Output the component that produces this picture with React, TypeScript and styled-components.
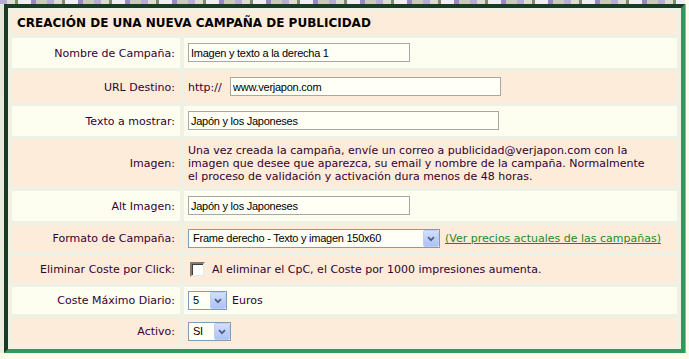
import React from 'react'
import styled, { createGlobalStyle } from 'styled-components'

type Tone = 'peach' | 'ivory'

const tones: Record<Tone, string> = {
  peach: '#fdecd9',
  ivory: '#fefef0',
}

const GlobalStyle = createGlobalStyle`
  html, body {
    margin: 0;
    padding: 0;
    background: #fdfde9;
  }
  body {
    font-family: "DejaVu Sans", Verdana, sans-serif;
    font-size: 11px;
    color: #330033;
  }
`

const Backdrop = styled.div`
  display: inline-block;
  vertical-align: top;
  padding: 4px 0 0 4px;
  background:
    repeating-linear-gradient(90deg, #b7acd6 0 7px, #dcdcd0 7px 15px, #7d8c6a 15px 18px, #efeef4 18px 31px, #9a88c4 31px 36px, #c8cbb8 36px 47px) top left / 100% 4px no-repeat,
    linear-gradient(180deg, #e4e6d8, #eceee2);
`

const Frame = styled.div`
  width: 665px;
  padding: 4px;
  border: 4px solid;
  border-color: #1b3a24 #2e9b5c #2e9b5c #1b3a24;
  background:
    radial-gradient(circle at 97% 4%, rgba(150, 120, 200, 0.35) 0 6px, transparent 7px),
    radial-gradient(circle at 40% 30%, rgba(200, 200, 190, 0.5) 0 3px, transparent 4px),
    #f0f1e5;
  box-shadow: 1px 0 0 #a9aaa0;
`

const FormGrid = styled.div`
  display: grid;
  grid-template-columns: 168px 493px;
  gap: 4px;
`

const HeaderCell = styled.div`
  grid-column: 1 / span 2;
  background: ${tones.peach};
  padding: 4px 5px;
  font-weight: bold;
  font-size: 12px;
  line-height: 14px;
  color: #000;
`

const LabelCell = styled.div<{ $tone: Tone }>`
  background: ${p => tones[p.$tone]};
  display: flex;
  align-items: center;
  justify-content: flex-end;
  padding: 4px 5px 4px 4px;
  line-height: 13px;
  white-space: nowrap;
`

const ValueCell = styled.div<{ $tone: Tone }>`
  background: ${p => tones[p.$tone]};
  display: flex;
  align-items: center;
  padding: 4px;
  line-height: 13px;
  white-space: nowrap;
`

const TextInput = styled.input<{ $width: number }>`
  box-sizing: border-box;
  width: ${p => p.$width}px;
  height: 19px;
  margin: 1px 0 2px;
  padding: 0 2px;
  border: 1px solid #a6a9a8;
  background: #fffff6;
  font-family: "Liberation Sans", Arial, sans-serif;
  font-size: 11px;
  letter-spacing: -0.25px;
  color: #000;
  outline: none;
`

const Prefix = styled.span`
  width: 42px;
  flex: none;
`

const SelectBox = styled.div<{ $width: number }>`
  box-sizing: border-box;
  width: ${p => p.$width}px;
  height: 19px;
  display: inline-flex;
  align-items: stretch;
  border: 1px solid #7f9db9;
  background: #fffff6;
  flex: none;
`

const SelectText = styled.span`
  flex: 1;
  padding-left: 4px;
  display: flex;
  align-items: center;
  font-family: "Liberation Sans", Arial, sans-serif;
  font-size: 11px;
  letter-spacing: -0.25px;
  color: #000;
  overflow: hidden;
`

const ArrowButton = styled.span`
  box-sizing: border-box;
  width: 16px;
  display: flex;
  align-items: center;
  justify-content: center;
  border: 1px solid #bccdf6;
  border-radius: 2px;
  background: linear-gradient(180deg, #d3e0fd 0%, #bccef8 55%, #aec3f3 100%);
`

const GreenLink = styled.a`
  margin-left: 5px;
  color: #1f8a22;
  text-decoration: underline;
  cursor: pointer;
`

const Checkbox = styled.span`
  box-sizing: border-box;
  width: 15px;
  height: 15px;
  margin: 2px 7px 2px 2px;
  flex: none;
  border: 2px solid;
  border-color: #7c7c72 #ecece4 #ecece4 #7c7c72;
  box-shadow: inset 1px 1px 0 #3e3e3a;
  background: #fff;
`

const Unit = styled.span`
  margin-left: 5px;
`

const Note = styled.p`
  margin: 0;
  white-space: normal;
`

const Select = ({ value, width }: { value: string; width: number }) => (
  <SelectBox $width={width}>
    <SelectText>{value}</SelectText>
    <ArrowButton>
      <svg width="8" height="6" viewBox="0 0 8 6">
        <path d="M1 1.2 L4 4.2 L7 1.2" fill="none" stroke="#4b5f86" strokeWidth="1.7" />
      </svg>
    </ArrowButton>
  </SelectBox>
)

const rows: { label: string; tone: Tone; content: React.ReactNode }[] = [
  {
    label: 'Nombre de Campaña:',
    tone: 'ivory',
    content: <TextInput $width={222} defaultValue="Imagen y texto a la derecha 1" />,
  },
  {
    label: 'URL Destino:',
    tone: 'peach',
    content: (
      <>
        <Prefix>http://</Prefix>
        <TextInput $width={271} defaultValue="www.verjapon.com" />
      </>
    ),
  },
  {
    label: 'Texto a mostrar:',
    tone: 'ivory',
    content: <TextInput $width={311} defaultValue="Japón y los Japoneses" />,
  },
  {
    label: 'Imagen:',
    tone: 'peach',
    content: (
      <Note>
        Una vez creada la campaña, envíe un correo a publicidad@verjapon.com con la
        <br />
        imagen que desee que aparezca, su email y nombre de la campaña. Normalmente
        <br />
        el proceso de validación y activación dura menos de 48 horas.
      </Note>
    ),
  },
  {
    label: 'Alt Imagen:',
    tone: 'ivory',
    content: <TextInput $width={222} defaultValue="Japón y los Japoneses" />,
  },
  {
    label: 'Formato de Campaña:',
    tone: 'peach',
    content: (
      <>
        <Select width={252} value="Frame derecho - Texto y imagen 150x60" />
        <GreenLink>(Ver precios actuales de las campañas)</GreenLink>
      </>
    ),
  },
  {
    label: 'Eliminar Coste por Click:',
    tone: 'peach',
    content: (
      <>
        <Checkbox />
        Al eliminar el CpC, el Coste por 1000 impresiones aumenta.
      </>
    ),
  },
  {
    label: 'Coste Máximo Diario:',
    tone: 'ivory',
    content: (
      <>
        <Select width={39} value="5" />
        <Unit>Euros</Unit>
      </>
    ),
  },
  {
    label: 'Activo:',
    tone: 'peach',
    content: <Select width={43} value="SI" />,
  },
]

export default function App() {
  return (
    <>
      <GlobalStyle />
      <Backdrop>
        <Frame>
          <FormGrid>
            <HeaderCell>CREACIÓN DE UNA NUEVA CAMPAÑA DE PUBLICIDAD</HeaderCell>
            {rows.map(row => (
              <React.Fragment key={row.label}>
                <LabelCell $tone={row.tone}>{row.label}</LabelCell>
                <ValueCell $tone={row.tone}>{row.content}</ValueCell>
              </React.Fragment>
            ))}
          </FormGrid>
        </Frame>
      </Backdrop>
    </>
  )
}
